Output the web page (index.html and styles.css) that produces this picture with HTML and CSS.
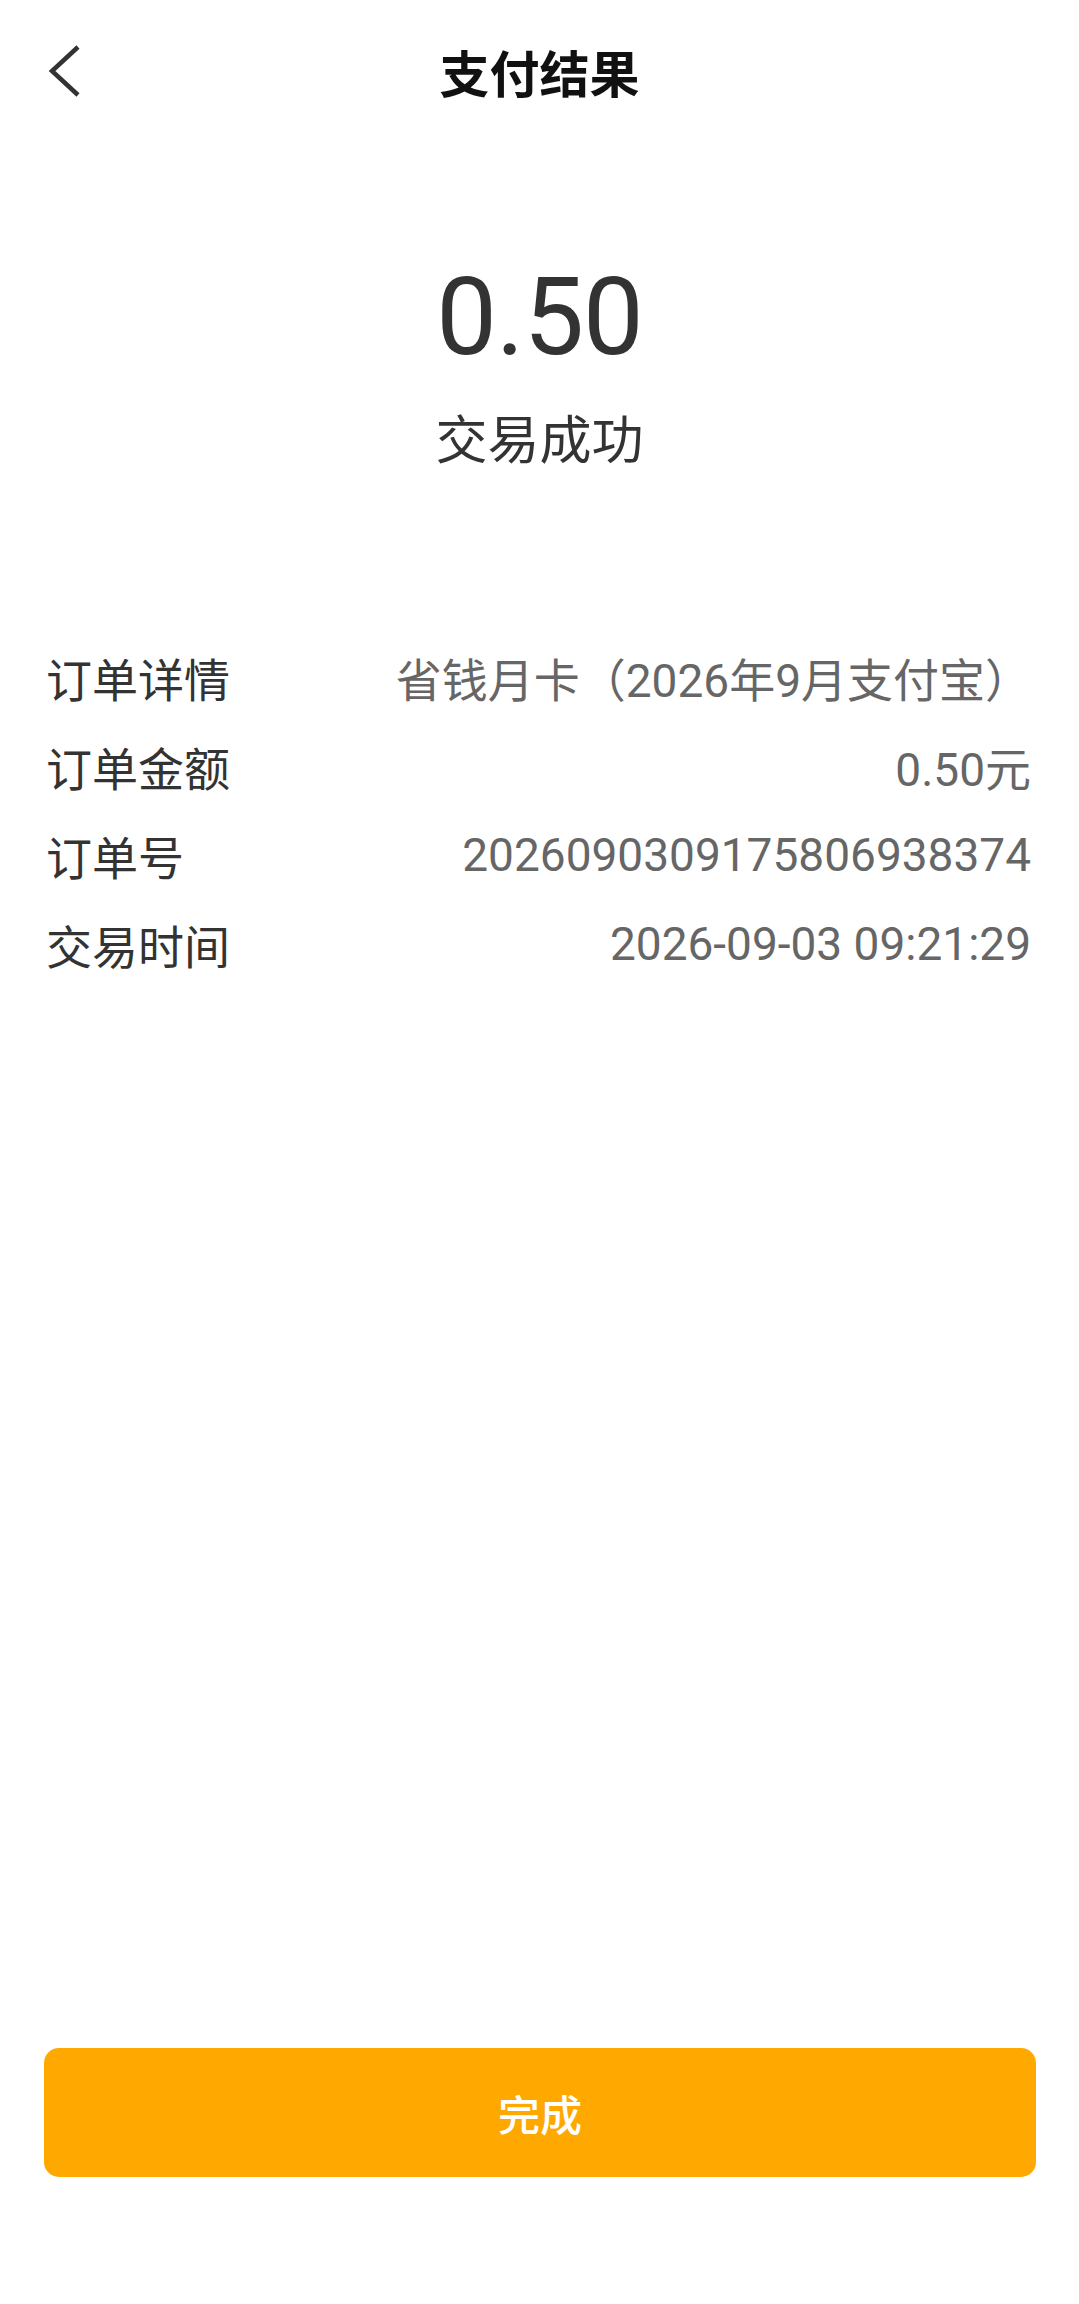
FILE: index.html
```html
<!DOCTYPE html>
<html lang="zh-CN">
<head>
    <meta charset="UTF-8">
    <meta name="viewport" content="width=device-width, initial-scale=1.0">
    <title>支付结果</title>
    <link rel="stylesheet" href="styles.css">
</head>
<body>

<div class="page">
    <div class="top-bar">
        <div class="back-btn">
            <svg width="40" height="56" viewBox="0 0 40 56">
                <polyline points="32,4 6,28 32,52" fill="none" stroke="#333" stroke-width="4.5" stroke-linejoin="miter"/>
            </svg>
        </div>
        <h1 class="page-title">支付结果</h1>
        <div></div>
    </div>

    <div class="result">
        <div class="amount">0.50</div>
        <div class="status">交易成功</div>
    </div>

    <div class="order-info">
        <div class="info-row">
            <span class="info-label">订单详情</span>
            <span class="info-value">省钱月卡（2026年9月支付宝）</span>
        </div>
        <div class="info-row">
            <span class="info-label">订单金额</span>
            <span class="info-value">0.50元</span>
        </div>
        <div class="info-row">
            <span class="info-label">订单号</span>
            <span class="info-value">2026090309175806938374</span>
        </div>
        <div class="info-row">
            <span class="info-label">交易时间</span>
            <span class="info-value">2026-09-03 09:21:29</span>
        </div>
    </div>

    <div class="spacer"></div>

    <div class="footer">
        <button class="done-button">完成</button>
    </div>
</div>

</body>
</html>
```

FILE: styles.css
```css
/* Payment result page */
body {
    margin: 0;
    padding: 0;
    background-color: #ffffff;
    font-family: Roboto, "Noto Sans CJK SC", sans-serif;
    color: #333333;
}

.page {
    display: flex;
    flex-direction: column;
    min-height: 2304px;
}

.top-bar {
    display: grid;
    grid-template-columns: 1fr auto 1fr;
    align-items: center;
    height: 142px;
}

.back-btn {
    display: flex;
    align-items: center;
    padding-left: 46px;
}

.page-title {
    margin: 0;
    font-size: 50px;
    font-weight: 700;
    color: #111111;
}

.result {
    display: flex;
    flex-direction: column;
    align-items: center;
    padding-top: 110px;
}

.amount {
    font-size: 108px;
    line-height: 130px;
    color: #333333;
    letter-spacing: -1px;
}

.status {
    font-size: 52px;
    line-height: 70px;
    margin-top: 25px;
    color: #333333;
}

.order-info {
    display: flex;
    flex-direction: column;
    padding: 155px 48px 0 46px;
}

.info-row {
    display: flex;
    justify-content: space-between;
    align-items: center;
    height: 89px;
    font-size: 46px;
}

.info-label {
    color: #333333;
}

.info-value {
    color: #666666;
}

.spacer {
    flex: 1;
}

.footer {
    padding: 0 43px 127px 44px;
}

.done-button {
    width: 100%;
    height: 129px;
    border: none;
    border-radius: 15px;
    background-color: #ffa900;
    color: #ffffff;
    font-family: Roboto, "Noto Sans CJK SC", sans-serif;
    font-size: 42px;
    font-weight: 500;
    cursor: pointer;
}
```
